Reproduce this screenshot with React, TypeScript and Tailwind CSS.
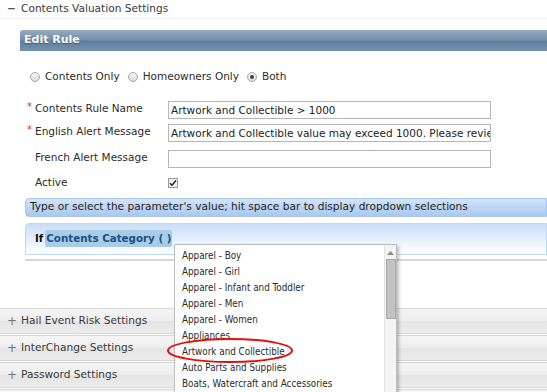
import React from 'react';

const font = { fontFamily: '"DejaVu Sans", Verdana, sans-serif' };

const options = [
  'Apparel - Boy',
  'Apparel - Girl',
  'Apparel - Infant and Toddler',
  'Apparel - Men',
  'Apparel - Women',
  'Appliances',
  'Artwork and Collectible',
  'Auto Parts and Supplies',
  'Boats, Watercraft and Accessories',
  'Books',
];

const Radio = ({ checked }: { checked?: boolean }) => (
  <span className="inline-flex h-[10px] w-[10px] items-center justify-center rounded-full border border-[#a8a8a8] bg-gradient-to-b from-[#f4f4f4] to-[#dcdcdc]">
    {checked && <span className="h-[4px] w-[4px] rounded-full bg-[#444]" />}
  </span>
);

const FieldRow = ({ label, required, value, mt }: { label: string; required?: boolean; value?: string; mt: string }) => (
  <div className={`flex items-start ${mt}`}>
    <div className="flex w-[141px] items-start pt-[1px]">
      <span className="w-[8px] text-[10px] leading-[10px] text-[#e0303a]">{required ? '*' : ''}</span>
      <span className="text-[10.5px] leading-[13px] text-[#2b2b2b]">{label}</span>
    </div>
    <div className="h-[18px] w-[323px] overflow-hidden whitespace-nowrap border border-[#b5b5b5] bg-white pl-[2px] text-[10.5px] leading-[16px] text-[#222]">
      {value}
    </div>
  </div>
);

const AccordionRow = ({ title }: { title: string }) => (
  <div className="flex h-[26px] items-center border-y border-[#d6d6d6] bg-[linear-gradient(#f5f5f5,#eeeeee_50%,#e4e4e4_51%,#ececec)] pl-[7px] text-[10.6px] text-[#3a3a3a]">
    <span className="w-[14px] text-[12px] leading-none text-[#777]">+</span>
    <span>{title}</span>
  </div>
);

export default function App() {
  return (
    <div className="relative h-[392px] w-[547px] overflow-hidden bg-white" style={font}>
      {/* top section header */}
      <div className="flex h-[19px] items-center border-b border-[#f0f0f0] pl-[7px] text-[10.6px] text-[#3a3a3a]">
        <span className="w-[14px] font-bold text-[#555]">−</span>
        <span>Contents Valuation Settings</span>
      </div>

      <div className="pl-[20px]">
        {/* Edit Rule header */}
        <div className="mt-[11px] flex h-[21px] items-center rounded-tl-[3px] bg-[linear-gradient(#97abc1,#7490ac_45%,#5f7f9b_55%,#7893ad)] pl-[4px] text-[11px] font-bold text-white [text-shadow:0_1px_1px_rgba(0,0,0,0.35)]">
          Edit Rule
        </div>

        <div className="pl-[7px]">
          {/* radio options */}
          <div className="mt-[19px] flex h-[14px] items-center pl-[3px] text-[10.5px] text-[#2b2b2b]">
            <Radio />
            <span className="ml-[5px]">Contents Only</span>
            <span className="ml-[8px] flex"><Radio /></span>
            <span className="ml-[5px]">Homeowners Only</span>
            <span className="ml-[8px] flex"><Radio checked /></span>
            <span className="ml-[5px]">Both</span>
          </div>

          <FieldRow mt="mt-[17px]" required label="Contents Rule Name" value="Artwork and Collectible > 1000" />
          <FieldRow
            mt="mt-[5px]"
            required
            label="English Alert Message"
            value="Artwork and Collectible value may exceed 1000. Please review"
          />
          <FieldRow mt="mt-[8px]" label="French Alert Message" />

          <div className="mt-[7px] flex items-center">
            <span className="w-[141px] pl-[8px] text-[10.5px] text-[#2b2b2b]">Active</span>
            <span className="flex h-[10px] w-[10px] items-center justify-center border border-[#9a9a9a] bg-[#f0f0f0]">
              <svg width="8" height="8" viewBox="0 0 8 8">
                <path d="M1 4.2 L3 6.3 L7 1.5" fill="none" stroke="#222" strokeWidth="1.4" />
              </svg>
            </span>
          </div>
        </div>

        <div className="pl-[5px]">
          {/* info bar */}
          <div className="mt-[7px] flex h-[19px] items-center rounded-l-[4px] border border-[#a9c6ea] bg-gradient-to-b from-[#d3e4f8] to-[#a9c8ee] pl-[4px] text-[10.6px] text-[#222]">
            Type or select the parameter's value; hit space bar to display dropdown selections
          </div>

          {/* condition box */}
          <div className="mt-[6px] flex h-[32px] items-center rounded-tl-[4px] border border-[#c2d8f2] bg-gradient-to-b from-[#c9def7] to-white pl-[9px] text-[10.3px] font-bold">
            <span className="text-[#111]">If</span>
            <span className="ml-[2px] rounded-[2px] bg-[#a9cde6] px-[1px] py-[1px] text-[#1b4f86]">Contents Category ( )</span>
          </div>

          <div className="mt-[4px] h-[2px] bg-[#d8d8d8]" />
        </div>
      </div>

      {/* collapsed sections */}
      <div className="mt-[47px] flex flex-col gap-[1px]">
        <AccordionRow title="Hail Event Risk Settings" />
        <AccordionRow title="InterChange Settings" />
        <AccordionRow title="Password Settings" />
        <AccordionRow title="" />
      </div>

      {/* dropdown list */}
      <div className="absolute left-[174px] top-[244px] flex h-[160px] w-[223px] border border-[#bdbdbd] bg-white shadow-[2px_2px_3px_rgba(0,0,0,0.25)]">
        <div className="flex-1 pt-[3px]" style={{ fontFamily: '"DejaVu Sans Condensed", "Liberation Sans", sans-serif' }}>
          {options.map((o) => (
            <div key={o} className="h-[16px] whitespace-nowrap pl-[7px] text-[9.8px] leading-[16px] text-[#2b2b2b]">
              {o}
            </div>
          ))}
        </div>
        <div className="flex w-[12px] flex-col items-center border-l border-[#e2e2e2] bg-[#f4f4f4]">
          <svg width="7" height="4" viewBox="0 0 7 4" className="mt-[6px]">
            <path d="M0 4 L3.5 0 L7 4 Z" fill="#8a8a8a" />
          </svg>
          <div className="mt-[4px] h-[60px] w-[10px] border border-[#a8a8a8] bg-[#c3c3c3]" />
        </div>
      </div>

      {/* red annotation ellipse */}
      <svg className="absolute left-[166px] top-[337px]" width="128" height="27" viewBox="0 0 128 27">
        <ellipse cx="64" cy="13.5" rx="62" ry="11.5" fill="none" stroke="#e01010" strokeWidth="2" />
      </svg>
    </div>
  );
}
